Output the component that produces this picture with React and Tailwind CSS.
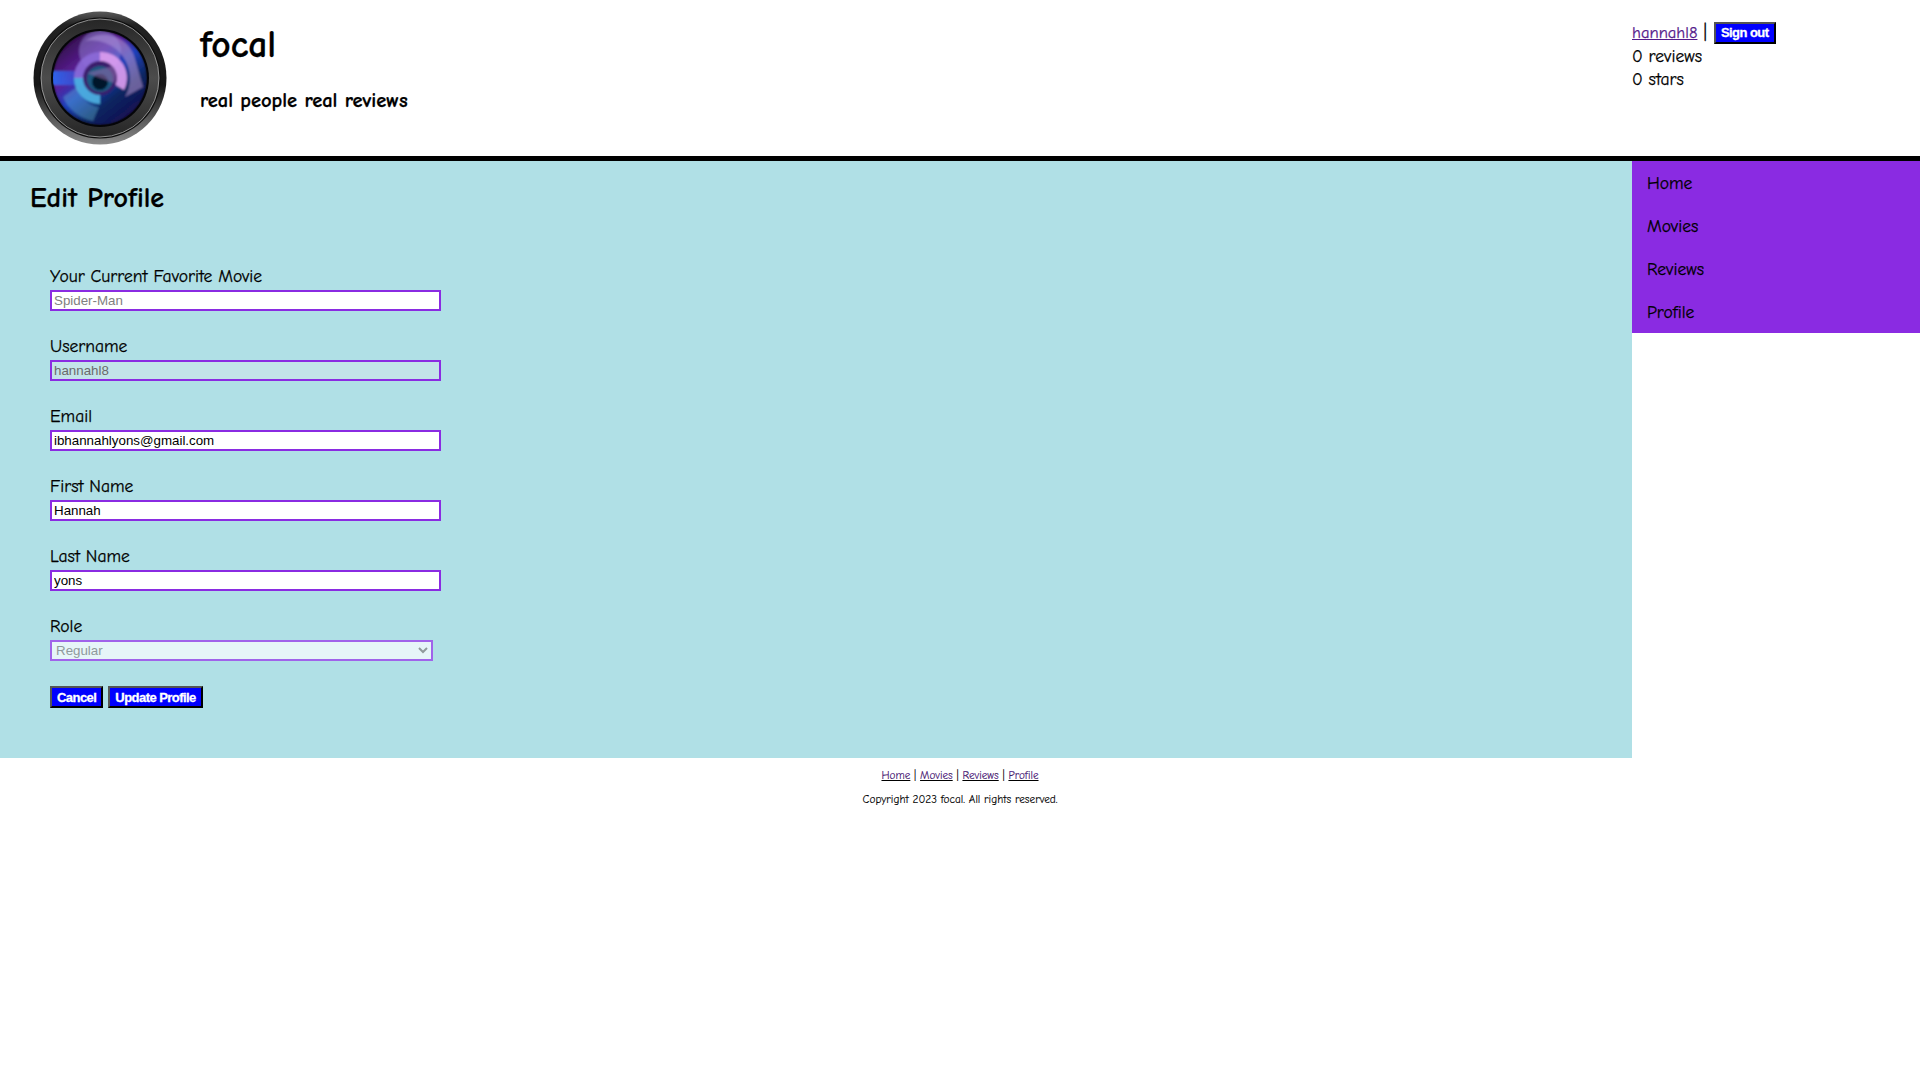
const comic = 'font-["Comic_Sans_MS","Comic_Neue","Noto_Sans",sans-serif]'

function LensLogo() {
  return (
    <svg width="134" height="134" viewBox="0 0 134 134" className="shrink-0">
      <defs>
        <linearGradient id="rim" x1="0" y1="0" x2="0" y2="1">
          <stop offset="0" stopColor="#5a5a5a" />
          <stop offset="0.1" stopColor="#222222" />
          <stop offset="0.55" stopColor="#161616" />
          <stop offset="1" stopColor="#8a8a8a" />
        </linearGradient>
        <linearGradient id="ring" x1="0" y1="0" x2="0" y2="1">
          <stop offset="0" stopColor="#262626" />
          <stop offset="0.5" stopColor="#4c4c4c" />
          <stop offset="1" stopColor="#262626" />
        </linearGradient>
        <linearGradient id="glass" x1="0.1" y1="0.1" x2="0.8" y2="1">
          <stop offset="0" stopColor="#2e0c44" />
          <stop offset="0.3" stopColor="#5c1f98" />
          <stop offset="0.5" stopColor="#1f40bc" />
          <stop offset="0.72" stopColor="#0c2660" />
          <stop offset="1" stopColor="#160850" />
        </linearGradient>
        <linearGradient id="band" x1="0" y1="0" x2="1" y2="0">
          <stop offset="0" stopColor="#2d66f0" />
          <stop offset="1" stopColor="#2d66f0" stopOpacity="0" />
        </linearGradient>
        <linearGradient id="swirl" x1="0" y1="1" x2="1" y2="0">
          <stop offset="0" stopColor="#4eb8e6" />
          <stop offset="0.5" stopColor="#7456cc" />
          <stop offset="1" stopColor="#dd98ea" />
        </linearGradient>
        <clipPath id="glassClip">
          <circle cx="67" cy="67" r="47" />
        </clipPath>
        <filter id="soft">
          <feGaussianBlur stdDeviation="0.8" />
        </filter>
      </defs>
      <circle cx="67" cy="67" r="66.5" fill="url(#rim)" />
      <circle cx="67" cy="67" r="60.5" fill="#0e0e0e" />
      <circle cx="67" cy="67" r="59" fill="url(#ring)" stroke="#bdbdbd" strokeWidth="0.7" />
      <circle cx="67" cy="67" r="49" fill="#050508" />
      <g clipPath="url(#glassClip)" filter="url(#soft)">
        <circle cx="67" cy="67" r="47" fill="url(#glass)" />
        <rect x="18" y="60" width="52" height="14" fill="url(#band)" />
        <path d="M52 30a32 32 0 0 1 50 18l8 28-18 10a38 38 0 0 0-40-56z" fill="#b896d0" opacity="0.55" />
        <circle cx="67" cy="40" r="21" fill="#9c92e2" opacity="0.45" />
        <path d="M67 41a26 26 0 0 1 24 38l-10-6a16 16 0 0 0-14-22z" fill="#df9ff0" opacity="0.9" />
        <path d="M67 41a26 26 0 0 0-26 26l10 0a16 16 0 0 1 16-16z" fill="#8c6ad8" opacity="0.9" />
        <path d="M41 67a26 26 0 0 0 26 26l0-10a16 16 0 0 1-16-16z" fill="#4fb4e2" opacity="0.9" />
        <path d="M30 86a40 40 0 0 0 30 24l6-14a28 28 0 0 1-22-20z" fill="#6cc6e2" opacity="0.35" />
        <circle cx="67" cy="67" r="17" fill="#3a1a6c" />
        <circle cx="67" cy="68" r="13" fill="#1f5880" />
        <circle cx="67" cy="71" r="8" fill="#06142a" />
        <path d="M54 62l26-7a15 15 0 0 1 1 17z" fill="#8a68a8" opacity="0.6" />
      </g>
    </svg>
  )
}

function BlueButton({ children }) {
  return (
    <button className='h-[22px] px-[5px] bg-[#0000ff] text-white border-2 border-t-[#555555] border-l-[#555555] border-r-black border-b-black text-[13px] leading-none font-bold tracking-[-0.55px] [-webkit-text-stroke:0.3px_white] font-["Liberation_Sans",sans-serif]'>
      {children}
    </button>
  )
}

function Field({ label, value, tone = 'text-black bg-white' }) {
  return (
    <div className="flex flex-col h-[70px]">
      <label className="h-[23px] text-[17.6px] leading-[25px] text-black">{label}</label>
      <input
        readOnly
        value={value}
        className={`w-[391px] h-[21px] mt-[3px] px-[2px] border-2 border-[#8a2be2] text-[13.33px] outline-none [-webkit-text-stroke:0] font-["Liberation_Sans",sans-serif] ${tone}`}
      />
    </div>
  )
}

export default function App() {
  return (
    <div className={`min-h-screen bg-white text-black [-webkit-text-stroke:0.25px_black] ${comic}`}>
      {/* Header */}
      <header className="flex h-[161px] border-b-[5px] border-black">
        <div className="w-[1632px] flex pl-[33px] pt-[11px]">
          <LensLogo />
          <div className="ml-[33px]">
            <h1 className="text-[37.5px] font-bold leading-[44px] mt-[12px]">focal</h1>
            <h2 className="text-[20.5px] font-bold leading-[26px] mt-[21px]">real people real reviews</h2>
          </div>
        </div>
        <div className="flex-1 text-[17.6px] leading-[23px] pt-[21px]">
          <div className="flex items-center h-[23px]">
            <a href="#" className="underline text-[#551a8b] text-[16.6px] [-webkit-text-stroke:0.25px_#551a8b]">hannahl8</a>
            <span className="ml-[6px] mr-[7px]">|</span>
            <BlueButton>Sign out</BlueButton>
          </div>
          <div className="mt-[1px]">0 reviews</div>
          <div>0 stars</div>
        </div>
      </header>

      <div className="flex">
        {/* Form */}
        <main className="w-[1632px] h-[597px] bg-[#b0e0e6] pl-[30px] pt-[21px]">
          <h1 className="text-[28px] font-bold leading-[33px]">Edit Profile</h1>
          <form className="pl-[20px] pt-[49px]">
            <Field label="Your Current Favorite Movie" value="Spider-Man" tone="text-[#808080] bg-white" />
            <Field label="Username" value="hannahl8" tone="text-[#6a6a6a] bg-[#c3e3e9]" />
            <Field label="Email" value="ibhannahlyons@gmail.com" />
            <Field label="First Name" value="Hannah" />
            <Field label="Last Name" value="yons" />
            <div className="flex flex-col h-[70px]">
              <label className="h-[23px] text-[17.6px] leading-[25px]">Role</label>
              <select disabled className='w-[383px] h-[21px] mt-[3px] border-2 border-[#a063ea] bg-[#e6f5f8] text-[#8f9a9c] text-[13.33px] [-webkit-text-stroke:0] font-["Liberation_Sans",sans-serif]'>
                <option>Regular</option>
              </select>
            </div>
            <div className="flex gap-[5px] mt-[2px]">
              <BlueButton>Cancel</BlueButton>
              <BlueButton>Update Profile</BlueButton>
            </div>
          </form>
        </main>

        {/* Side nav */}
        <nav className="flex-1 self-start bg-[#8a2be2]">
          {['Home', 'Movies', 'Reviews', 'Profile'].map((item) => (
            <a key={item} href="#" className="block h-[43px] pl-[15px] leading-[44px] text-[17.6px] text-black">
              {item}
            </a>
          ))}
        </nav>
      </div>

      {/* Footer */}
      <footer className="text-center text-[11.3px] leading-[15px] pt-[10px] [-webkit-text-stroke:0.1px_black]">
        <div className="text-[11.2px]">
          <a href="#" className="underline text-[#551a8b]">Home</a> |{' '}
          <a href="#" className="underline text-[#551a8b]">Movies</a> |{' '}
          <a href="#" className="underline text-[#551a8b]">Reviews</a> |{' '}
          <a href="#" className="underline text-[#551a8b]">Profile</a>
        </div>
        <p className="mt-[9px]">Copyright 2023 focal. All rights reserved.</p>
      </footer>
    </div>
  )
}
